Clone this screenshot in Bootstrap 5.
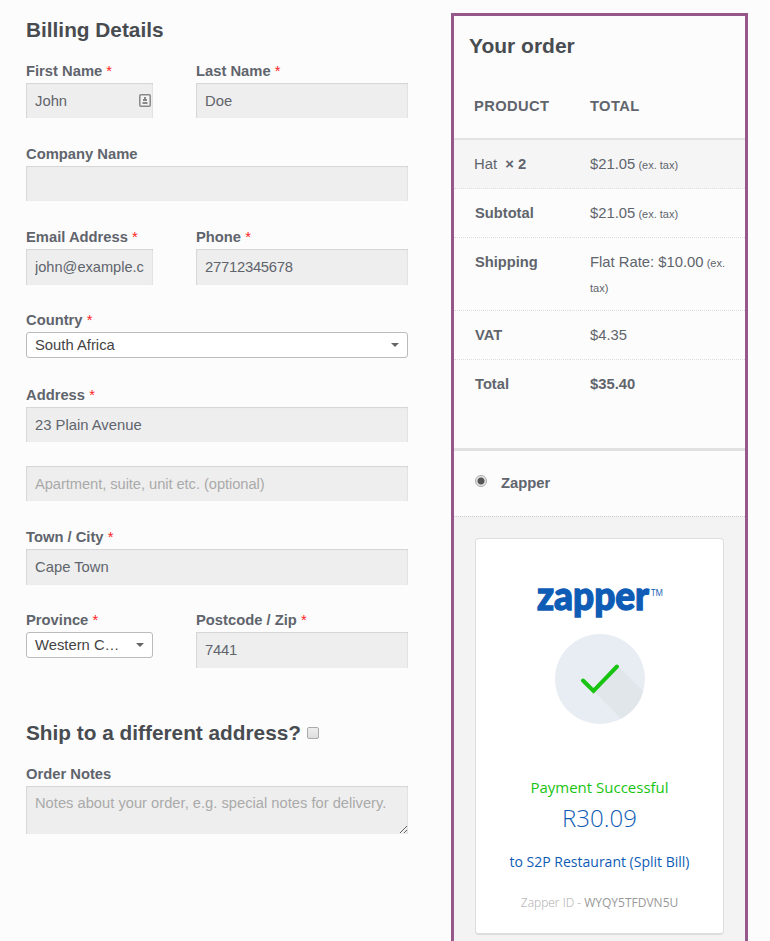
<!DOCTYPE html>
<html lang="en">
<head>
<meta charset="utf-8">
<meta name="viewport" content="width=device-width, initial-scale=1">
<title>Checkout</title>
<link rel="stylesheet" href="https://cdn.jsdelivr.net/npm/bootstrap@5.3.0/dist/css/bootstrap.min.css">
<style>
body{background:#fcfcfc;color:#60646c;font:15px/24px "Liberation Sans",Arial,sans-serif}
.checkout{height:941px;gap:43px;padding-left:26px}
.billing{width:382px;padding-top:14px}
.order{width:297px;height:960px;margin-top:13px;border:3px solid #96588a}
h2,h3{font-size:21px;line-height:32px;font-weight:700;color:#484c51;margin:0}
.billing h2,.billing h3{font-size:20.8px}
.billing h2{margin-bottom:13px}
.field{height:83px}
.field-select{height:75px}
.field-bare{height:59px}
.pair{gap:43px}
.pair .field:first-child{width:127px}
.pair .field:last-child{width:212px}
label{display:block;font-weight:700;line-height:24px;font-size:14.75px}
.req{color:#f22;font-weight:400}
.form-control,.form-control:focus{height:35px;padding:0 8px 0 9px;border:0;border-radius:0;background:#eee;color:#60646c;font-size:14.8px;line-height:24px;box-shadow:inset 1px 1px 1px rgba(0,0,0,.1),inset -1px 0 1px rgba(0,0,0,.05)}
.form-control.tall{height:36px;padding-bottom:1px}
#em{font-size:14.6px}
#ph,#zp{letter-spacing:-.25px}
.form-control::placeholder{color:#aaa;font-size:14.7px;letter-spacing:-.06px}
textarea.form-control{height:48px;min-height:48px;padding-top:5px;resize:vertical;overflow:hidden}
textarea.form-control::placeholder{letter-spacing:.01px}
.contact{top:11px;right:2px}
.picker{height:26px;background:#fff;border:1px solid #bbb;border-radius:3px;padding:0 8px;color:#444;font-size:14.8px}
.caret{width:0;height:0;border:4px solid transparent;border-top-color:#666;border-bottom:0}
.ship{margin-top:26px;margin-bottom:13px}
.tick{width:12px;height:12px;border:1px solid #aaa;border-radius:2px;background:linear-gradient(#eee,#ddd);margin:0 0 0 6px}
.order h3{padding:14px 15px 0;height:58px}
.sum{color:#60646c;margin:0;table-layout:fixed;border-collapse:separate;border-spacing:0}
.sum th,.sum td{background:none;vertical-align:top;line-height:25px;padding:12px 20px 11px 21px;border:0;border-bottom:1px dotted #ddd;font-size:14.8px}
.sum th{font-size:14.7px}
.sum td:last-child{padding-left:20px;padding-right:10px}
.sum thead th{height:66px;padding:20px 20px 0;border-bottom:2px solid #e3e3e3;letter-spacing:.4px}
.sum .item td{background:#f5f5f5;padding-left:20px}
.sum .shipping>*{padding-bottom:10px}
.sum tfoot tr:last-child>*{border:0;padding-bottom:12px}
.sum small{font-size:11px;line-height:1;margin-left:-1px}
.pay{margin-top:39px;border-top:3px solid #e1e1e1;height:68px;padding:0 21px 2px;font-size:14.8px}
.dot{width:12px;height:12px;border:1px solid #aaa;border-radius:50%;background:radial-gradient(circle,#555 0 3px,#e6e6e6 4px);margin:-4px 14px 0 0}
.paybox{background:#f3f3f3;border-top:1px dotted #ccc;height:500px;padding:21px 21px 0}
.receipt{height:397px;border:1px solid #ddd;border-bottom-width:2px;border-radius:4px;font-family:"Open Sans",sans-serif;text-align:center}
.ok{color:#18c411;font-size:15px;line-height:24px;margin-top:46px}
.amount{color:#0e5cb5;font-size:24px;font-weight:300;line-height:38px}
.place{color:#0e5cb5;font-size:14px;line-height:24px;margin-top:13px}
.zid{color:#aaa;font-size:12px;font-weight:300;line-height:24px;margin-top:17px}
.zid span{font-weight:400;color:#999}
</style>
<script src="https://cdn.jsdelivr.net/npm/bootstrap@5.3.0/dist/js/bootstrap.bundle.min.js"></script>
</head>
<body>
<main class="checkout d-flex overflow-hidden">
<form class="billing flex-shrink-0">
  <h2>Billing Details</h2>
  <div class="pair d-flex">
    <div class="field"><label for="fn">First Name <span class="req">*</span></label>
      <div class="position-relative"><input id="fn" class="form-control" value="John">
      <svg class="contact position-absolute" width="12" height="13" viewBox="0 0 12 13"><rect x=".8" y=".8" width="10.4" height="11.4" rx="1" fill="#f4f4f4" stroke="#888" stroke-width="1.5"/><path d="M5 3h2v2h1v2H4V5h1zM3.500 8h5v2h-5z" fill="#888"/></svg></div></div>
    <div class="field"><label for="ln">Last Name <span class="req">*</span></label><input id="ln" class="form-control" value="Doe"></div>
  </div>
  <div class="field"><label for="co">Company Name</label><input id="co" class="form-control"></div>
  <div class="pair d-flex">
    <div class="field"><label for="em">Email Address <span class="req">*</span></label><input id="em" class="form-control tall" value="john@example.c"></div>
    <div class="field"><label for="ph">Phone <span class="req">*</span></label><input id="ph" class="form-control tall" value="27712345678"></div>
  </div>
  <div class="field-select"><label>Country <span class="req">*</span></label>
    <div class="picker d-flex align-items-center justify-content-between"><span>South Africa</span><i class="caret"></i></div></div>
  <div class="field"><label for="ad">Address <span class="req">*</span></label><input id="ad" class="form-control" value="23 Plain Avenue"></div>
  <div class="field-bare"><input class="form-control" placeholder="Apartment, suite, unit etc. (optional)"></div>
  <div class="field"><label for="ci">Town / City <span class="req">*</span></label><input id="ci" class="form-control tall" value="Cape Town"></div>
  <div class="pair d-flex">
    <div class="field"><label>Province <span class="req">*</span></label>
      <div class="picker d-flex align-items-center justify-content-between"><span>Western C…</span><i class="caret"></i></div></div>
    <div class="field"><label for="zp">Postcode / Zip <span class="req">*</span></label><input id="zp" class="form-control tall" value="7441"></div>
  </div>
  <div class="ship d-flex align-items-center"><h3>Ship to a different address?</h3><span class="tick" role="checkbox" aria-checked="false"></span></div>
  <label for="no">Order Notes</label>
  <textarea id="no" class="form-control" placeholder="Notes about your order, e.g. special notes for delivery."></textarea>
</form>
<section class="order flex-shrink-0">
  <h3>Your order</h3>
  <table class="sum table">
    <colgroup><col width="116"><col></colgroup>
    <thead><tr><th>PRODUCT</th><th>TOTAL</th></tr></thead>
    <tbody><tr class="item"><td>Hat&nbsp; <strong>× 2</strong></td><td>$21.05 <small>(ex. tax)</small></td></tr></tbody>
    <tfoot>
      <tr><th>Subtotal</th><td>$21.05 <small>(ex. tax)</small></td></tr>
      <tr class="shipping"><th>Shipping</th><td>Flat Rate: $10.00 <small>(ex. tax)</small></td></tr>
      <tr><th>VAT</th><td>$4.35</td></tr>
      <tr><th>Total</th><td><strong>$35.40</strong></td></tr>
    </tfoot>
  </table>
  <div class="pay d-flex align-items-center"><span class="dot" role="radio" aria-checked="true"></span><strong>Zapper</strong></div>
  <div class="paybox">
    <div class="receipt bg-white">
      <svg class="d-block mx-auto" width="128" height="190" viewBox="0 0 128 190">
        <g fill="#0e5cb5">
          <text x="1" y="70.500" font-family="Lato,sans-serif" font-size="39" font-weight="900" stroke="#0e5cb5" stroke-width="1.300" textLength="112" lengthAdjust="spacingAndGlyphs">zapper</text>
          <text x="115" y="57" font-family="Open Sans,sans-serif" font-size="9" textLength="12" lengthAdjust="spacingAndGlyphs">TM</text>
        </g>
        <clipPath id="disc"><circle cx="64" cy="140" r="45"/></clipPath>
        <circle cx="64" cy="140" r="45" fill="#e8edf4"/>
        <path d="M57.500 152 82 127l40 40-25 25z" fill="#e1e6ea" clip-path="url(#disc)"/>
        <path d="M47 141.500 57.500 152 81 127.500" fill="none" stroke="#18c411" stroke-width="4" stroke-linecap="round"/>
      </svg>
      <div class="ok">Payment Successful</div>
      <div class="amount">R30.09</div>
      <div class="place">to S2P Restaurant (Split Bill)</div>
      <div class="zid">Zapper ID - <span>WYQY5TFDVN5U</span></div>
    </div>
  </div>
</section>
</main>
</body>
</html>
